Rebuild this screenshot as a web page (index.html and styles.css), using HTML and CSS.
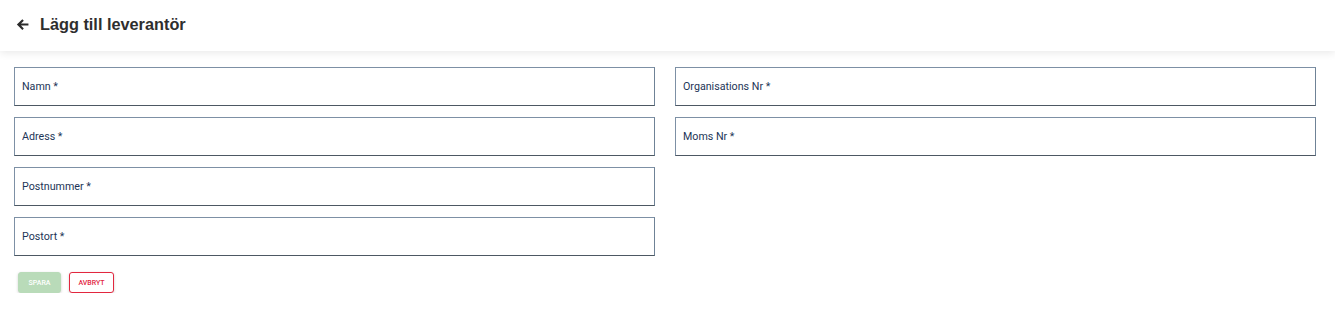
FILE: index.html
```html
<!DOCTYPE html>
<html lang="sv">
<head>
  <meta charset="UTF-8">
  <meta name="viewport" content="width=device-width,initial-scale=1">
  <title>Lägg till leverantör</title>
  <link rel="stylesheet" href="styles.css">
</head>
<body>
  <header class="topbar">
    <button class="back" aria-label="Tillbaka">
      <svg viewBox="0 0 24 24" width="15" height="15"><path d="M21.5 10.3H9.6l4.5-4.5L11.7 3.4 3 12l8.7 8.6 2.4-2.4-4.5-4.5h11.9z" fill="currentColor"/></svg>
    </button>
    <h1>Lägg till leverantör</h1>
  </header>

  <form class="supplier-form">
    <div class="cols">
      <div class="col">
        <label class="field"><input placeholder="Namn *"></label>
        <label class="field"><input placeholder="Adress *"></label>
        <label class="field"><input placeholder="Postnummer *"></label>
        <label class="field"><input placeholder="Postort *"></label>
      </div>
      <div class="col">
        <label class="field"><input placeholder="Organisations Nr *"></label>
        <label class="field"><input placeholder="Moms Nr *"></label>
      </div>
    </div>
    <div class="actions">
      <button type="button" class="btn save" disabled>Spara</button>
      <button type="button" class="btn cancel">Avbryt</button>
    </div>
  </form>
</body>
</html>
```

FILE: styles.css
```css
:root {
  --navy: #1d3557;
  --border: #7d90a5;
  --border-dark: #4d5863;
  --red: #e2273f;
  --green: #b9dbb9;
}
*, *::before, *::after { box-sizing: border-box; }
body {
  margin: 0;
  background: #fff;
  font-family: Roboto, "Liberation Sans", sans-serif;
}
.topbar {
  height: 51px;
  display: flex;
  align-items: center;
  padding: 0 0 0 15px;
  background: #fff;
  box-shadow: 0 2px 8px rgba(0,0,0,0.09);
}
.topbar .back {
  border: none; background: none; padding: 0;
  color: #2b2b2b;
  display: flex; align-items: center;
  margin-right: 10px;
  margin-top: -2px;
}
.topbar h1 {
  margin: 0;
  margin-top: -2px;
  font-family: "Liberation Sans", Arial, sans-serif;
  font-size: 16.3px;
  font-weight: bold;
  color: #2e2e2e;
}
.supplier-form {
  padding: 16px 19px 0 14px;
}
.cols {
  display: grid;
  grid-template-columns: 1fr 1fr;
  gap: 20px;
}
.col {
  display: flex;
  flex-direction: column;
  gap: 11px;
}
.field { display: block; }
.field input {
  width: 100%;
  height: 39px;
  border: 1px solid var(--border);
  border-bottom-color: var(--border-dark);
  border-right-color: #6f8296;
  padding: 0 7px;
  font-family: Roboto, sans-serif;
  font-size: 10.7px;
  color: var(--navy);
  background: #fff;
  outline: none;
}
.field input::placeholder { color: var(--navy); opacity: 1; }
.actions {
  display: flex;
  gap: 8px;
  padding: 16px 0 0 4px;
}
.btn {
  height: 21px;
  padding: 0;
  border-radius: 3px;
  font-family: Roboto, sans-serif;
  font-size: 7px;
  font-weight: 500;
  text-transform: uppercase;
  box-shadow: 0 1px 3px rgba(0,0,0,0.18);
}
.btn.save {
  width: 43px;
  background: var(--green);
  border: 1px solid var(--green);
  color: #fff;
}
.btn.cancel {
  width: 45px;
  background: #fff;
  border: 1px solid var(--red);
  color: var(--red);
}
```
